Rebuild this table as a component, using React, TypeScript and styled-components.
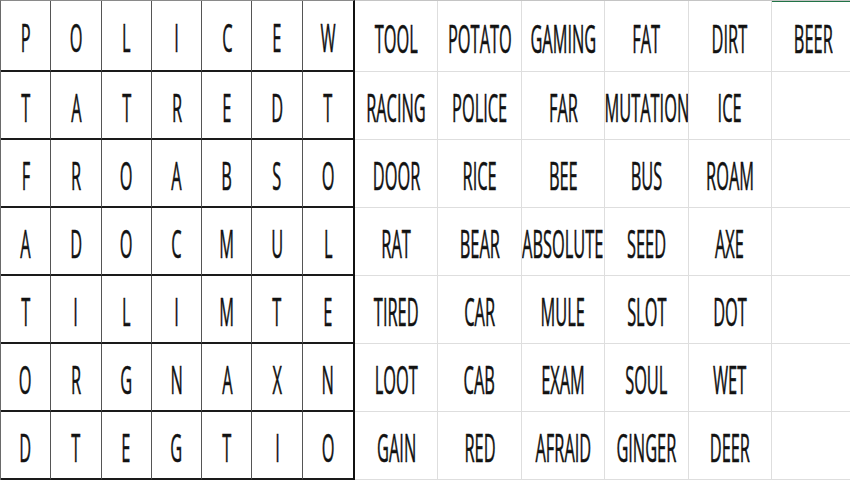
import React from "react";
import styled, { createGlobalStyle } from "styled-components";

const Global = createGlobalStyle`
  html, body { margin: 0; padding: 0; background: #ffffff; }
  body { font-family: "Open Sans", "Liberation Sans", sans-serif; }
`;

const letters = [
  "POLICEW",
  "TATREDT",
  "FROABSO",
  "ADOCMUL",
  "TILIMTE",
  "ORGNAXN",
  "DTEGTIO",
];

const words: string[][] = [
  ["TOOL", "POTATO", "GAMING", "FAT", "DIRT", "BEER"],
  ["RACING", "POLICE", "FAR", "MUTATION", "ICE", ""],
  ["DOOR", "RICE", "BEE", "BUS", "ROAM", ""],
  ["RAT", "BEAR", "ABSOLUTE", "SEED", "AXE", ""],
  ["TIRED", "CAR", "MULE", "SLOT", "DOT", ""],
  ["LOOT", "CAB", "EXAM", "SOUL", "WET", ""],
  ["GAIN", "RED", "AFRAID", "GINGER", "DEER", ""],
];

const rows = "71px repeat(6, 68px)";

const Sheet = styled.div`
  display: flex;
  width: 850px;
  height: 480px;
  overflow: hidden;
  background: #fff;
`;

const LetterGrid = styled.div`
  flex: none;
  display: grid;
  grid-template-columns: repeat(7, 50.3px);
  grid-template-rows: ${rows};
  border-top: 1px solid #8a8a8a;
  border-left: 1px solid #6a6a6a;
  border-right: 2px solid #111;
  box-sizing: content-box;
`;

const LetterCell = styled.div<{ $lastCol: boolean }>`
  box-sizing: border-box;
  display: flex;
  align-items: center;
  justify-content: center;
  border-right: ${(p) => (p.$lastCol ? "none" : "1px solid #555")};
  border-bottom: 2px solid #1a1a1a;
  overflow: hidden;
`;

const WordGrid = styled.div`
  flex: none;
  display: grid;
  grid-template-columns: repeat(6, 83.4px);
  grid-template-rows: ${rows};
  border-top: 1px solid #c4c4c4;
`;

const WordCell = styled.div<{ $selected?: boolean }>`
  box-sizing: border-box;
  display: flex;
  align-items: center;
  justify-content: center;
  border-right: 1px solid #dedede;
  border-bottom: 1px solid #dedede;
  box-shadow: ${(p) => (p.$selected ? "inset 0 1px 0 #217346" : "none")};
  overflow: hidden;
`;

const Glyphs = styled.span`
  display: inline-block;
  flex: none;
  font-family: "Open Sans", "Liberation Sans", sans-serif;
  font-size: 39px;
  line-height: 1;
  color: #111;
  white-space: nowrap;
  -webkit-text-stroke: 0.6px #111;
  -webkit-font-smoothing: antialiased;
  transform: scaleX(0.42);
  transform-origin: center;
  margin-top: 2px;
`;

export default function App() {
  return (
    <>
      <Global />
      <Sheet>
        <LetterGrid>
          {letters.map((row, r) =>
            row.split("").map((ch, c) => (
              <LetterCell key={`${r}-${c}`} $lastCol={c === 6}>
                <Glyphs>{ch}</Glyphs>
              </LetterCell>
            ))
          )}
        </LetterGrid>
        <WordGrid>
          {words.map((row, r) =>
            row.map((w, c) => (
              <WordCell key={`${r}-${c}`} $selected={r === 0 && c === 5}>
                {w && <Glyphs>{w}</Glyphs>}
              </WordCell>
            ))
          )}
        </WordGrid>
      </Sheet>
    </>
  );
}
